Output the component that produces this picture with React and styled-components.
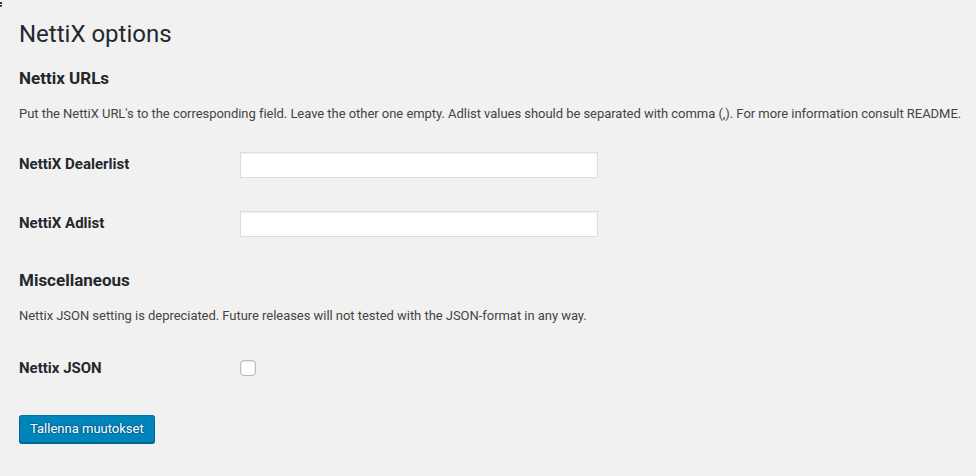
import React from "react";
import styled, { createGlobalStyle } from "styled-components";

const GlobalStyle = createGlobalStyle`
  html, body {
    margin: 0;
    padding: 0;
    background: #f1f1f1;
  }
  body {
    font-family: Roboto, "Liberation Sans", sans-serif;
    font-size: 13px;
    color: #444;
  }
`;

const Page = styled.div`
  position: relative;
  min-height: 476px;
  padding: 0 19px;
  box-sizing: border-box;
`;

const CornerMark = styled.span`
  position: absolute;
  left: 0;
  top: 2px;
  width: 0;
  height: 5px;
  border-left: 2px dotted #333;
`;

const Title = styled.h1`
  margin: 0;
  padding-top: 19px;
  font-size: 24px;
  line-height: 30px;
  font-weight: 400;
  color: #23282d;
`;

const SectionTitle = styled.h2`
  margin: ${(p) => (p.first ? "19px" : "17px")} 0 0;
  font-size: 17px;
  line-height: 20px;
  font-weight: 700;
  color: #23282d;
`;

const Description = styled.p`
  margin: 17px 0 0;
  font-size: 13px;
  line-height: 18px;
  letter-spacing: -0.04px;
  white-space: nowrap;
  color: #444;
`;

const FormTable = styled.div`
  margin-top: ${(p) => p.offset || 12}px;
`;

const FieldRow = styled.div`
  display: grid;
  grid-template-columns: 221px 1fr;
  align-items: center;
  height: 59px;
`;

const Label = styled.label`
  padding-bottom: 2px;
  font-size: 15px;
  line-height: 18px;
  font-weight: 700;
  color: #23282d;
`;

const TextInput = styled.input`
  box-sizing: border-box;
  width: 358px;
  height: 26px;
  margin: 0;
  padding: 3px 5px;
  background: #fff;
  border: 1px solid #ddd;
  box-shadow: inset 0 1px 2px rgba(0, 0, 0, 0.07);
  font-family: inherit;
  font-size: 14px;
  color: #32373c;
  outline: none;
`;

const Checkbox = styled.input`
  appearance: none;
  box-sizing: border-box;
  width: 16px;
  height: 16px;
  margin: 1px 0 0;
  background: #fefefe;
  border: 1px solid #b4b9be;
  border-radius: 4px;
  box-shadow: inset 0 1px 2px rgba(0, 0, 0, 0.1);
`;

const SubmitRow = styled.p`
  margin: 17px 0 0;
`;

const PrimaryButton = styled.button`
  box-sizing: border-box;
  height: 28px;
  margin: 0;
  padding: 0 10px 1px;
  background: #0085ba;
  border: 1px solid;
  border-color: #0073aa #006799 #006799;
  border-radius: 3px;
  box-shadow: 0 1px 0 #006799;
  color: #fff;
  font-family: inherit;
  font-size: 13px;
  line-height: 26px;
  text-shadow: 0 -1px 1px #006799, 1px 0 1px #006799, 0 1px 1px #006799,
    -1px 0 1px #006799;
  cursor: pointer;
`;

export default function App() {
  return (
    <Page>
      <GlobalStyle />
      <CornerMark />
      <Title>NettiX options</Title>

      <SectionTitle first>Nettix URLs</SectionTitle>
      <Description>
        Put the NettiX URL's to the corresponding field. Leave the other one
        empty. Adlist values should be separated with comma (,). For more
        information consult README.
      </Description>
      <FormTable>
        <FieldRow>
          <Label htmlFor="dealerlist">NettiX Dealerlist</Label>
          <div>
            <TextInput id="dealerlist" type="text" />
          </div>
        </FieldRow>
        <FieldRow>
          <Label htmlFor="adlist">NettiX Adlist</Label>
          <div>
            <TextInput id="adlist" type="text" />
          </div>
        </FieldRow>
      </FormTable>

      <SectionTitle>Miscellaneous</SectionTitle>
      <Description>
        Nettix JSON setting is depreciated. Future releases will not tested with
        the JSON-format in any way.
      </Description>
      <FormTable offset={14}>
        <FieldRow>
          <Label htmlFor="json">Nettix JSON</Label>
          <div>
            <Checkbox id="json" type="checkbox" />
          </div>
        </FieldRow>
      </FormTable>

      <SubmitRow>
        <PrimaryButton type="button">Tallenna muutokset</PrimaryButton>
      </SubmitRow>
    </Page>
  );
}
